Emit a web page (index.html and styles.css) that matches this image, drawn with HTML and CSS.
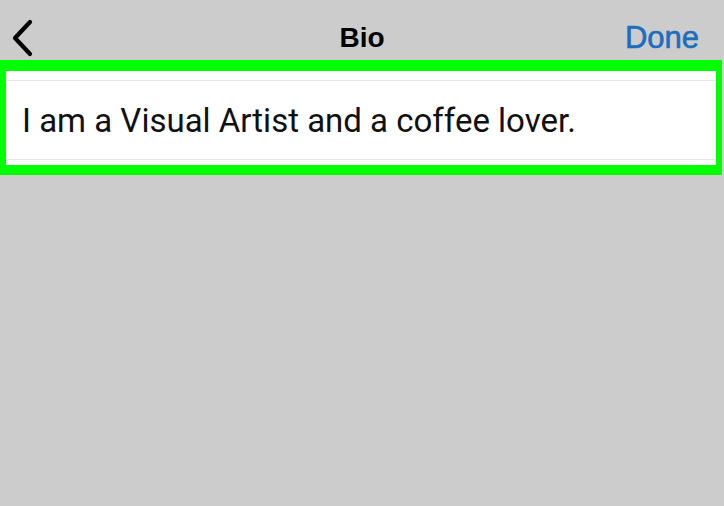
FILE: index.html
```html
<!DOCTYPE html>
<html>
<head>
<meta charset="utf-8">
<link rel="stylesheet" href="styles.css">
</head>
<body>
<div class="screen">
  <header class="nav">
    <div class="nav-left">
      <svg class="back" width="26" height="38" viewBox="0 0 26 38">
        <path d="M20 3 L5 19 L20 35" fill="none" stroke="#000" stroke-width="4.2" stroke-linecap="round" stroke-linejoin="round"/>
      </svg>
    </div>
    <div class="title">Bio</div>
    <div class="nav-right"><span class="done">Done</span></div>
  </header>
  <div class="highlight">
    <div class="field">
      <div class="field-text">I am a Visual Artist and a coffee lover.</div>
    </div>
  </div>
</div>
</body>
</html>
```
FILE: styles.css
```css
html, body {
  margin: 0;
  padding: 0;
}
body {
  background: #cccccc;
  width: 724px;
  height: 506px;
  overflow: hidden;
}
.screen {
  display: flex;
  flex-direction: column;
}
.nav {
  height: 60px;
  box-sizing: border-box;
  padding-top: 15px;
  display: grid;
  grid-template-columns: 1fr auto 1fr;
  align-items: center;
}
.nav-left {
  display: flex;
  align-items: center;
  padding-left: 10px;
}
.back {
  display: block;
}
.title {
  font-family: "Liberation Sans", Arial, sans-serif;
  font-weight: bold;
  font-size: 28px;
  color: #000;
  line-height: 1;
}
.nav-right {
  display: flex;
  justify-content: flex-end;
  padding-right: 25px;
}
.done {
  font-family: "Liberation Sans", Arial, sans-serif;
  font-size: 31px;
  color: #1c6dbf;
  line-height: 1;
  -webkit-text-stroke: 0.6px #1c6dbf;
}
.highlight {
  border-style: solid;
  border-color: #00ff00;
  border-width: 11px 6px 10px 6px;
  margin-right: 2px;
}
.field {
  background: #ffffff;
  height: 94px;
  box-sizing: border-box;
  padding: 9px 0 5px;
}
.field-text {
  height: 100%;
  box-sizing: border-box;
  border-top: 1px solid #e6e6e6;
  border-bottom: 1px solid #e6e6e6;
  display: flex;
  align-items: center;
  padding-left: 16px;
  font-family: Roboto, "Noto Sans", sans-serif;
  font-size: 33px;
  color: #111;
}
```
